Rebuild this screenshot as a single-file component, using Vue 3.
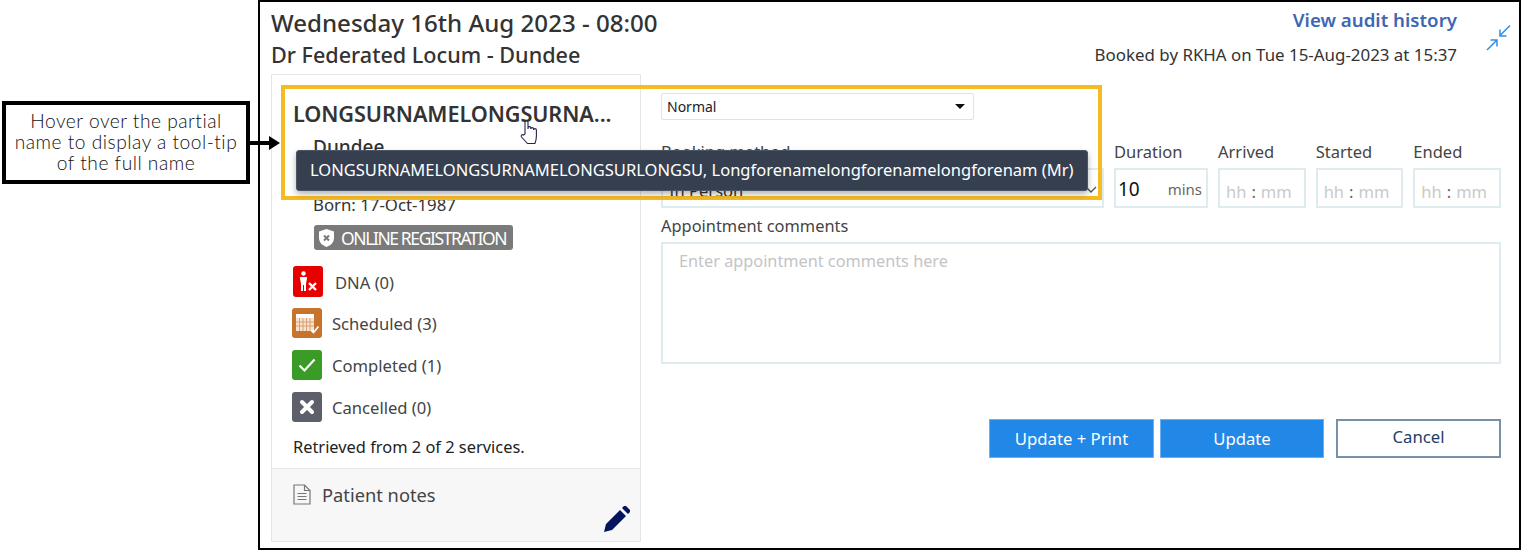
<script setup>
const stats = [
  { key: 'dna', label: 'DNA (0)' },
  { key: 'sched', label: 'Scheduled (3)' },
  { key: 'done', label: 'Completed (1)' },
  { key: 'cancel', label: 'Cancelled (0)' }
]
const times = ['Arrived', 'Started', 'Ended']
</script>

<template>
  <div class="page">
    <aside class="gutter">
      <div class="callout">Hover over the partial<br />name to display a tool-tip<br />of the full name</div>
      <svg class="arrow" width="32" height="16" viewBox="0 0 32 16"><path d="M0 6h20V1l11 7-11 7v-5H0z" fill="#000" /></svg>
    </aside>

    <main class="frame">
      <header class="head">
        <div class="titles">
          <h1>Wednesday 16th Aug 2023 - 08:00</h1>
          <h2>Dr Federated Locum - Dundee</h2>
        </div>
        <div class="meta">
          <a class="audit">View audit history</a>
          <p>Booked by RKHA on Tue 15-Aug-2023 at 15:37</p>
        </div>
        <svg class="compress" width="26" height="26" viewBox="0 0 26 26" fill="none" stroke="#2f8fe6" stroke-width="1.500">
          <path d="M24 .5 14 10.500M14 4.500v6.500h6.500M1 25 11 15M4.500 15H11v6.500" />
        </svg>
      </header>

      <div class="body">
        <section class="card">
          <div class="card-main">
            <div class="name">LONGSURNAMELONGSURNA...</div>
            <div class="town">Dundee</div>
            <div class="born">Born: 17-Oct-1987</div>
            <div class="badge">
              <svg width="15" height="18" viewBox="0 0 15 18"><path d="M7.500 0 15 2.500V9c0 4.500-3.500 7.500-7.500 9C3.500 16.500 0 13.500 0 9V2.500z" fill="#fff" /><path d="m5 6.500 5 5m0-5-5 5" stroke="#7a7a7a" stroke-width="2" /></svg>
              <span>ONLINE REGISTRATION</span>
            </div>
            <ul class="stats">
              <li v-for="s in stats" :key="s.key" :class="['stat', s.key]">
                <span class="tile">
                  <svg v-if="s.key === 'dna'" width="24" height="24" viewBox="0 0 24 24" fill="#fff">
                    <circle cx="7.500" cy="4.500" r="2.200" />
                    <path d="M4 8h7v1.500l-1 5.500v7H8v-6H7v6H5v-7L4 9.500z" />
                    <path d="m13 14 7 7m0-7-7 7" stroke="#fff" stroke-width="2.400" />
                  </svg>
                  <svg v-else-if="s.key === 'sched'" width="24" height="24" viewBox="0 0 24 24" fill="none">
                    <rect x="1" y="3" width="18" height="4" fill="#fff" />
                    <rect x="1" y="7" width="18" height="13" fill="#f6e3d2" />
                    <path d="M4.500 7v13M8 7v13M11.500 7v13M15 7v13M1 11h18M1 15h18" stroke="#d99a66" stroke-width=".9" />
                    <path d="m16 19 2.500 2.500L23.500 15.500" stroke="#fff" stroke-width="1.800" />
                  </svg>
                  <svg v-else-if="s.key === 'done'" width="20" height="20" viewBox="0 0 20 20" fill="none">
                    <path d="m2.500 10.500 5 5 10-11" stroke="#fff" stroke-width="2.200" />
                  </svg>
                  <svg v-else width="16" height="16" viewBox="0 0 16 16" fill="none">
                    <path d="m3 3 10 10m0-10L3 13" stroke="#fff" stroke-width="4" stroke-linecap="round" />
                  </svg>
                </span>
                <span class="stat-label">{{ s.label }}</span>
              </li>
            </ul>
            <p class="retrieved">Retrieved from 2 of 2 services.</p>
          </div>
          <footer class="notes">
            <div class="notes-title">
              <svg width="18" height="21" viewBox="0 0 18 21" fill="none" stroke="#777" stroke-width="1.200">
                <path d="M1 1h10.500L17 6.500V20H1zM11.500 1v5.500H17M4.500 9.500h9M4.500 12.500h9M4.500 15.500h9" />
              </svg>
              <span>Patient notes</span>
            </div>
            <svg class="pencil" width="26" height="26" viewBox="0 0 26 26" fill="#04145f">
              <path d="M0 26l2-8L16 4l6 6L8 24zM18 2l2-2q1-.5 2 0l4 4q.5 1 0 2l-2 2z" />
            </svg>
          </footer>
        </section>

        <section class="form">
          <div class="mini-select"><span>Normal</span><i class="caret"></i></div>
          <div class="fields">
            <div class="field method">
              <label>Booking method</label>
              <div class="input select-in">
                <span>In Person</span>
                <svg width="12" height="8" viewBox="0 0 12 8" fill="none" stroke="#555" stroke-width="1.400"><path d="m1 1 5 5 5-5" /></svg>
              </div>
            </div>
            <div class="field duration">
              <label>Duration</label>
              <div class="input dur"><b>10</b><span>mins</span></div>
            </div>
            <div v-for="t in times" :key="t" class="field time">
              <label>{{ t }}</label>
              <div class="input hhmm"><span>hh</span><em>:</em><span>mm</span></div>
            </div>
          </div>
          <label class="comments-label">Appointment comments</label>
          <div class="comments">Enter appointment comments here</div>
          <div class="actions">
            <button class="btn primary">Update + Print</button>
            <button class="btn primary second">Update</button>
            <button class="btn ghost">Cancel</button>
          </div>
        </section>
      </div>
    </main>

    <div class="highlight"></div>
    <div class="tooltip">LONGSURNAMELONGSURNAMELONGSURLONGSU, Longforenamelongforenamelongforenam (Mr)</div>
    <svg class="hand" width="19" height="26" viewBox="0 0 19 26" fill="#fff" stroke="#23264a" stroke-width="1.100">
      <path d="M5 14V2.500a1.500 1.500 0 0 1 3 0V9l0-1a1.400 1.400 0 0 1 2.800 0v1a1.400 1.400 0 0 1 2.800 0v1a1.400 1.400 0 0 1 2.800 0v6c0 3-.5 5-1.500 7.500H7.500L1.500 17c-1-1.500.5-3 2-2z" />
    </svg>
  </div>
</template>

<style>
html, body { margin: 0; background: #fff; }
</style>

<style scoped>
.page {
  position: relative;
  display: flex;
  width: 1521px;
  height: 550px;
  overflow: hidden;
  background: #fff;
  font-family: "Noto Sans", "Open Sans", sans-serif;
  color: #333;
}
.gutter {
  position: relative;
  flex: none;
  width: 258px;
  box-sizing: border-box;
  padding: 101px 0 0 2px;
}
.callout {
  box-sizing: border-box;
  width: 248px;
  height: 83px;
  border: 4px solid #000;
  text-align: center;
  font-family: "Lato", sans-serif;
  font-size: 19.200px;
  font-weight: 300;
  line-height: 21px;
  padding-top: 5px;
  color: #111;
  letter-spacing: .5px;
}
.arrow { position: absolute; left: 249px; top: 135px; }

.frame {
  flex: none;
  width: 1263px;
  height: 550px;
  box-sizing: border-box;
  border: 2px solid #000;
  padding: 0 0 0 11px;
}
.head { position: relative; display: flex; justify-content: space-between; height: 72px; }
h1 { margin: 5px 0 0; font-size: 24.100px; line-height: 32px; font-weight: 500; color: #333; }
h2 { margin: 2px 0 0; font-size: 21.600px; line-height: 28px; font-weight: 500; color: #333; }
.meta { margin-right: 62px; text-align: right; }
.audit { display: block; margin-top: 5px; font-size: 18.700px; line-height: 25px; font-weight: 600; color: #3f66b3; }
.meta p { margin: 12px 0 0; font-size: 16.900px; line-height: 22px; color: #333; }
.compress { position: absolute; right: 7px; top: 23px; }

.body { display: flex; }
.card {
  box-sizing: border-box;
  width: 370px;
  height: 468px;
  border: 1px solid #e6e6e6;
  display: flex;
  flex-direction: column;
}
.card-main { flex: 1; padding: 0 0 0 20px; }
.name { margin: 25px 0 0 1px; font-size: 21.700px; line-height: 28px; font-weight: 600; color: #333; letter-spacing: -.1px; }
.town { margin: 6px 0 0 21px; font-size: 19px; line-height: 26px; font-weight: 500; }
.born { margin: 34px 0 0 21px; font-size: 16.800px; line-height: 22px; color: #333; }
.badge {
  display: inline-flex;
  align-items: center;
  gap: 7px;
  margin: 9px 0 0 22px;
  height: 25px;
  width: 199px;
  box-sizing: border-box;
  padding-left: 5px;
  background: #7a7a7a;
  border-radius: 3px;
  color: #fff;
  font-size: 17.500px;
  letter-spacing: -1.400px;
}
.stats { list-style: none; margin: 14px 0 0; padding: 0; }
.stat { display: flex; align-items: center; height: 31px; margin-bottom: 11px; font-size: 16.600px; }
.stat.dna { margin-left: 1px; }
.stat.dna .stat-label { margin: 2px 0 0 12px; }
.stat.dna .tile { height: 31px; }
.stat-label { margin-left: 10px; color: #444; }
.tile {
  flex: none;
  width: 30px;
  height: 30px;
  border-radius: 3px;
  display: flex;
  align-items: center;
  justify-content: center;
}
.dna .tile { background: #e60000; }
.sched .tile { background: #c8732b; }
.done .tile { background: #3a9c26; }
.cancel .tile { background: #5d606b; }
.retrieved { margin: 13px 0 0 1px; font-size: 16.400px; line-height: 22px; color: #222; }
.notes {
  position: relative;
  height: 72px;
  flex: none;
  background: #f7f7f7;
  border-top: 1px solid #e6e6e6;
}
.notes-title { display: flex; align-items: center; gap: 11px; margin: 13px 0 0 21px; font-size: 18.300px; color: #444; }
.pencil { position: absolute; right: 10px; bottom: 9px; }

.form { flex: 1; padding: 19px 0 0 20px; width: 840px; }
.mini-select {
  box-sizing: border-box;
  width: 313px;
  height: 27px;
  display: flex;
  align-items: center;
  justify-content: space-between;
  padding: 0 8px 0 5px;
  border: 1px solid #d5e6ec;
  border-radius: 2px;
  font-size: 14px;
  color: #222;
}
.caret { width: 0; height: 0; border: 5px solid transparent; border-top: 5px solid #111; border-bottom: 0; }
.fields { display: flex; gap: 10px; margin-top: 21px; }
.field label { display: block; font-size: 16.500px; line-height: 22px; color: #444; margin-bottom: 5px; }
.input {
  box-sizing: border-box;
  height: 40px;
  border: 2px solid #deecf0;
  display: flex;
  align-items: center;
}
.method { width: 443px; }
.select-in { justify-content: space-between; padding: 4px 5px 0 6px; font-size: 16.500px; color: #333; }
.duration { width: 94px; }
.dur { padding: 2px 4px 0 2px; justify-content: space-between; }
.dur b { font-weight: 400; font-size: 19px; color: #111; }
.dur span { font-size: 15px; color: #666; }
.time { width: 87.670px; }
.hhmm { gap: 5px; padding: 6px 0 0 6px; font-size: 16.500px; color: #c9c9c9; }
.hhmm em { font-style: normal; color: #666; }
.comments-label { display: block; margin-top: 6px; font-size: 16.400px; line-height: 24px; color: #444; }
.comments {
  box-sizing: border-box;
  width: 840px;
  height: 122px;
  margin-top: 4px;
  padding: 6px 16px;
  border: 2px solid #deecf0;
  font-size: 16.300px;
  color: #c4c4c4;
}
.actions { display: flex; justify-content: flex-end; width: 840px; margin-top: 55px; gap: 6px; }
.btn {
  box-sizing: border-box;
  height: 39px;
  width: 165px;
  font: inherit;
  font-size: 16.700px;
  border-radius: 0;
}
.second { width: 164px; }
.primary { background: #2188e8; border: 1px solid #6cb0f0; color: #fff; }
.ghost { margin-left: 6px; background: #fff; border: 2px solid #7891a9; color: #1d4066; padding-bottom: 6px; }

.highlight {
  position: absolute;
  left: 281px;
  top: 85px;
  width: 821px;
  height: 115px;
  box-sizing: border-box;
  border: 4px solid #f5bb22;
  pointer-events: none;
}
.tooltip {
  position: absolute;
  left: 296px;
  top: 150px;
  width: 792px;
  height: 41px;
  box-sizing: border-box;
  padding-left: 13px;
  line-height: 37px;
  background: #353f4f;
  border: 1px solid #4b5563;
  border-radius: 3px;
  box-shadow: 0 3px 6px rgba(0, 0, 0, .3);
  color: #fff;
  font-size: 16.520px;
  white-space: nowrap;
}
.hand { position: absolute; left: 520px; top: 120px; }
</style>
